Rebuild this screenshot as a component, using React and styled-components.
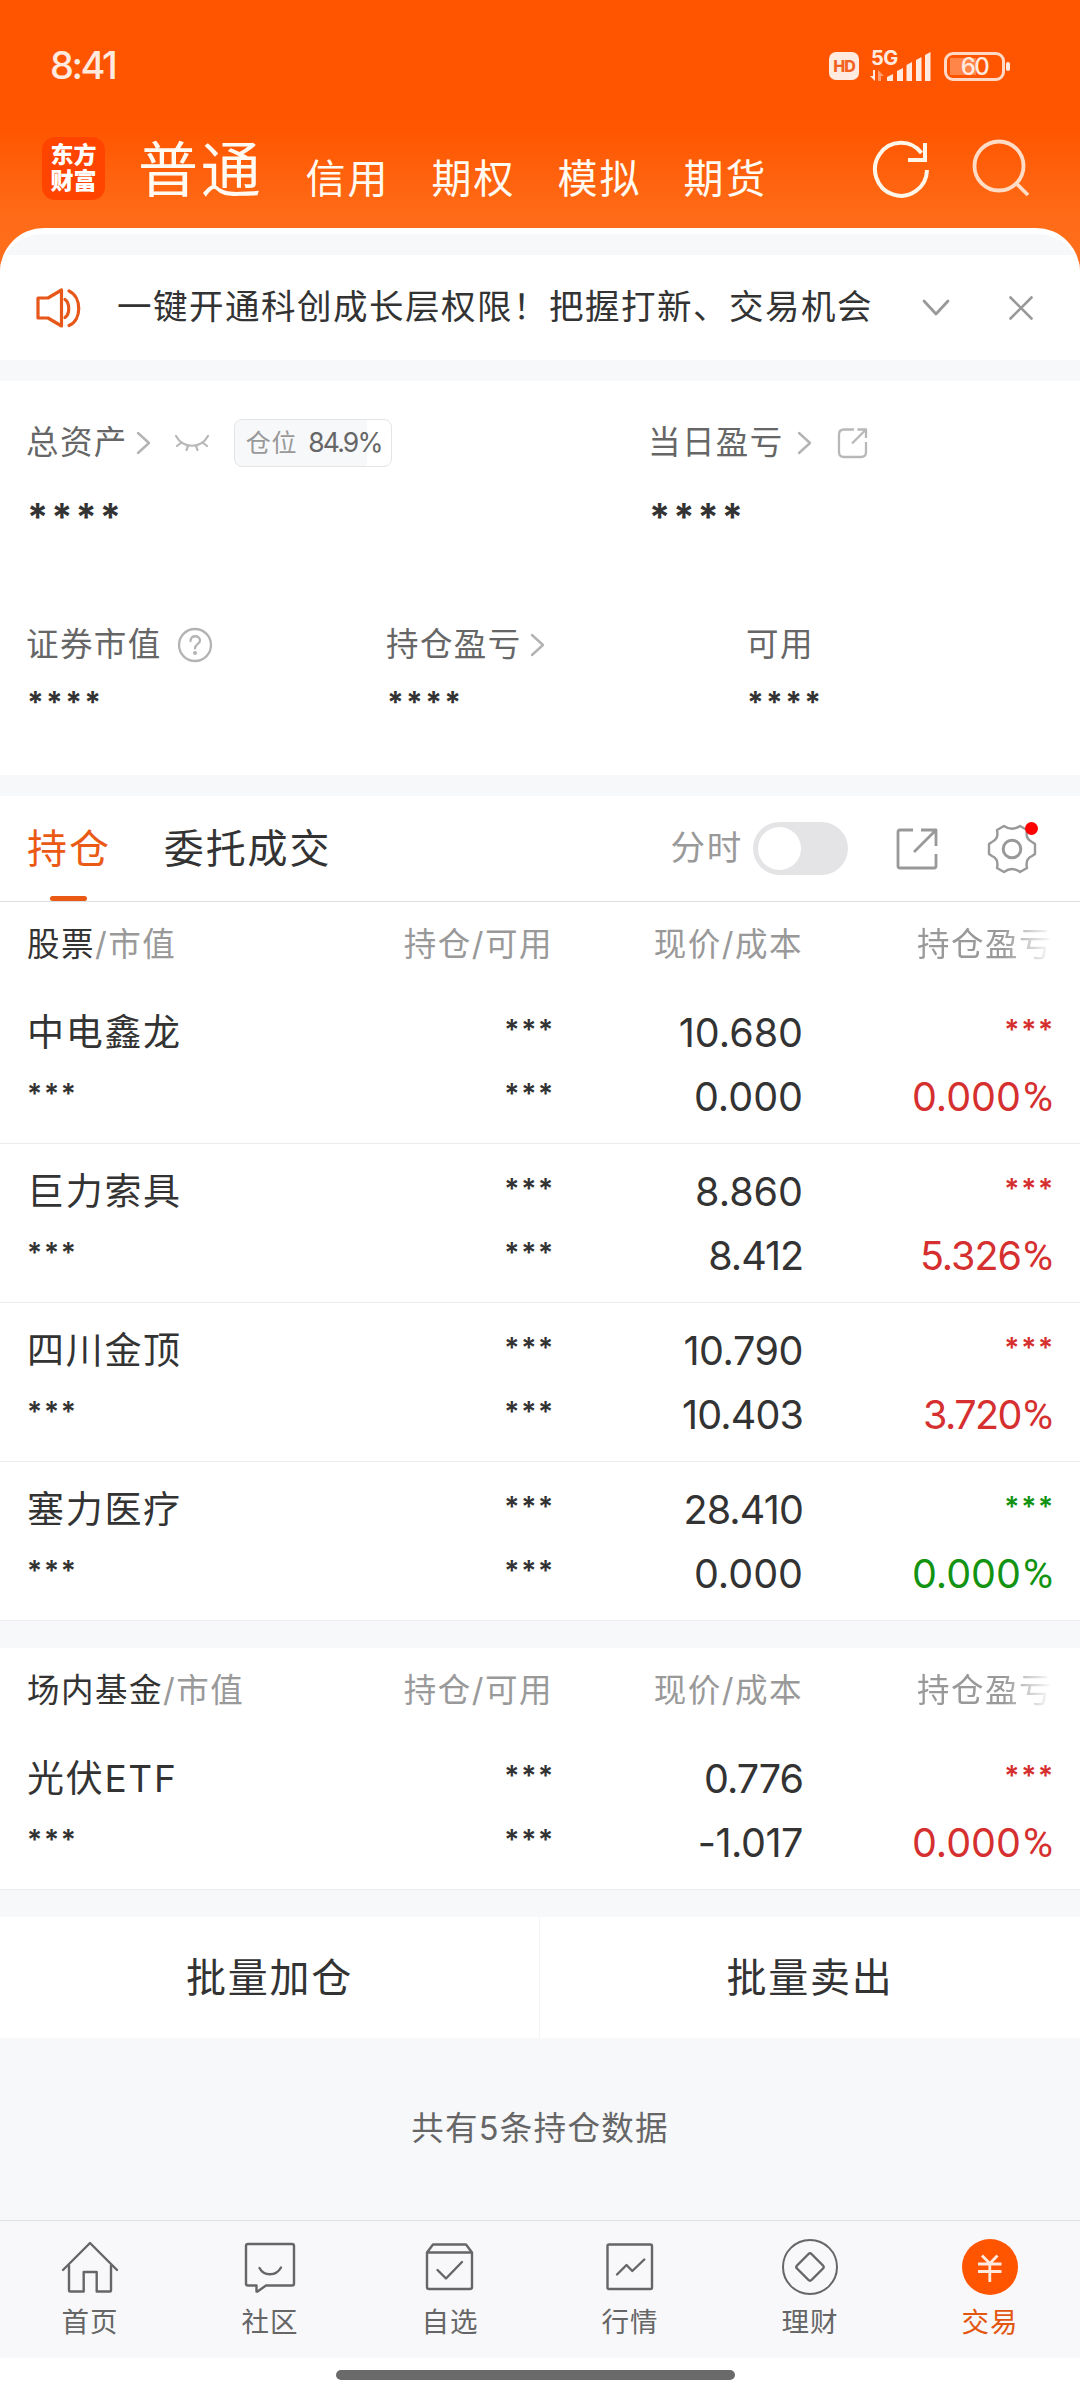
import React from "react";
import styled, { createGlobalStyle, css } from "styled-components";

////////////////////////////////////////////////////////////////////////////////
// GlobalStyle
////////////////////////////////////////////////////////////////////////////////
const GlobalStyle = createGlobalStyle`
  * {
    box-sizing: border-box;
  }

  body {
    margin: 0;
    background: #f7f8fa;
    color: #333;
    font-family: Inter, "Noto Sans CJK SC", sans-serif;
    line-height: 1.4;
  }
`;

const Page = styled.div`
  display: flex;
  flex-direction: column;
  width: 1080px;
  height: 2400px;
  overflow: hidden;
`;

////////////////////////////////////////////////////////////////////////////////
// Header: 状态栏 + 账户类型切换
////////////////////////////////////////////////////////////////////////////////
const Header = styled.header`
  flex: none;
  height: 280px;
  margin-bottom: -52px;
  background: linear-gradient(#ff5500 125px, #ff6b17 215px, #ff7020 280px);
`;

const StatusBar = styled.div`
  display: flex;
  align-items: center;
  height: 132px;
  padding: 0 75px 0 50px;
  color: #ffeae0;
`;

const Clock = styled.div`
  flex: 1;
  font-size: 38px;
  font-weight: 500;
  letter-spacing: -2.5px;
`;

const HdBadge = styled.div`
  width: 30px;
  height: 28px;
  margin-right: 10px;
  border-radius: 7px;
  background: #ffeae0;
  color: #f26322;
  font-size: 16px;
  font-weight: 800;
  line-height: 28px;
  letter-spacing: -1px;
  text-align: center;
`;

const Battery = styled.div`
  position: relative;
  width: 61px;
  height: 29px;
  margin-left: 12px;
  border: 3px solid #ffd9c6;
  border-radius: 9px;
  font-size: 24px;
  font-weight: 500;
  line-height: 24px;
  letter-spacing: -1.5px;
  text-align: center;
  background: linear-gradient(#ff8548, #ff8548) 3px 3px / 26px 17px no-repeat;

  &::after {
    content: "";
    position: absolute;
    right: -8px;
    top: 7px;
    width: 4px;
    height: 9px;
    border-radius: 2px;
    background: #ffeae0;
  }
`;

const AccountBar = styled.nav`
  display: flex;
  align-items: flex-start;
  padding: 5px 49px 0 42px;
`;

const Logo = styled.div`
  width: 63px;
  height: 63px;
  margin-right: 33px;
  padding-top: 5px;
  border-radius: 13px;
  background: #ff4400;
  color: #fff;
  font-size: 23px;
  font-weight: 900;
  line-height: 26px;
  text-align: center;
`;

const AccountTabs = styled.div`
  display: flex;
  flex: 1;
  align-items: flex-start;
  gap: 42px;
  height: 63px;
`;

const AccountTab = styled.span`
  color: #fffaf2;
  font-size: ${({ $active }) => ($active ? "60px" : "40px")};
  letter-spacing: ${({ $active }) => ($active ? "2.7px" : "2px")};
  line-height: ${({ $active }) => ($active ? "66px" : "84px")};
`;

const HeaderIcons = styled.div`
  display: flex;
  padding-top: 2px;
`;

////////////////////////////////////////////////////////////////////////////////
// Sheet: 圆角白色内容区
////////////////////////////////////////////////////////////////////////////////
const Sheet = styled.main`
  flex: none;
  border-radius: 44px 44px 0 0;
  border-top: 6px solid #fff;
  background: #f7f8fa;
  overflow: hidden;
`;

const Notice = styled.div`
  display: flex;
  align-items: center;
  height: 105px;
  margin-top: 21px;
  padding: 0 47px 0 35px;
  background: #fff;
`;

const NoticeText = styled.div`
  flex: 1;
  margin-left: 34px;
  font-size: 34.5px;
  letter-spacing: 1.5px;
  white-space: nowrap;
`;

const Assets = styled.section`
  height: 394px;
  margin-top: 21px;
  padding: 36px 27px 0 26px;
  background: #fff;
`;

const AssetRow = styled.div`
  display: grid;
  grid-template-columns: ${({ $columns }) => $columns};
  height: ${({ $height }) => $height};
`;

const AssetLabel = styled.div`
  display: flex;
  align-items: center;
  height: 52px;
  color: #666;
  font-size: 32.5px;
  letter-spacing: 1.4px;

  svg {
    flex: none;
  }
`;

const maskStyles = {
  large: css`
    font-size: 38px;
    font-weight: 700;
    letter-spacing: 3px;
    line-height: 40px;
    margin-top: 28px;
  `,
  medium: css`
    font-size: 30px;
    font-weight: 700;
    letter-spacing: 2.3px;
    line-height: 32px;
    margin-top: 15px;
  `,
};

const MaskedValue = styled.div`
  padding-left: 1px;
  ${({ $size }) => maskStyles[$size]}
`;

const PositionBadge = styled.div`
  display: flex;
  align-items: center;
  justify-content: space-between;
  width: 158px;
  height: 48px;
  margin-left: 24px;
  padding: 0 9px 0 11px;
  border: 1px solid #e3e4e6;
  border-radius: 8px;
  background: linear-gradient(90deg, #f7f8fa 84.9%, #fff 84.9%);
  color: #999;
  font-size: 25px;
  letter-spacing: 0.8px;

  b {
    color: #666;
    font-size: 26.5px;
    font-weight: 400;
    letter-spacing: -1.8px;
  }
`;

////////////////////////////////////////////////////////////////////////////////
// Toolbar: 持仓 / 委托成交
////////////////////////////////////////////////////////////////////////////////
const Toolbar = styled.div`
  display: flex;
  align-items: center;
  height: 106px;
  margin-top: 21px;
  padding: 0 43px 0 27px;
  border-bottom: 1px solid #dcdddf;
  background: #fff;
`;

const ViewTab = styled.div`
  position: relative;
  margin-right: 53px;
  color: ${({ $active }) => ($active ? "#ea5a14" : "#333")};
  font-size: 40px;
  line-height: 105px;
  letter-spacing: 1.9px;

  &::after {
    content: "";
    display: ${({ $active }) => ($active ? "block" : "none")};
    position: absolute;
    left: 23px;
    bottom: 0;
    width: 37px;
    height: 5px;
    border-radius: 3px;
    background: #ea5a14;
  }
`;

const SwitchLabel = styled.div`
  margin-left: auto;
  color: #999;
  font-size: 34.5px;
  letter-spacing: 1.8px;
`;

const Switch = styled.div`
  width: 95px;
  height: 53px;
  margin: 0 48px 0 10px;
  padding: 5px;
  border-radius: 27px;
  background: #e4e4e6;

  &::before {
    content: "";
    display: block;
    width: 43px;
    height: 43px;
    border-radius: 50%;
    background: #fff;
  }
`;

const SettingsButton = styled.div`
  position: relative;
  display: flex;
  margin-left: 49px;

  &::after {
    content: "";
    position: absolute;
    right: -1px;
    top: -2px;
    width: 13px;
    height: 13px;
    border-radius: 50%;
    background: #fe0000;
  }
`;

////////////////////////////////////////////////////////////////////////////////
// Holdings: 持仓表
////////////////////////////////////////////////////////////////////////////////
const HoldingTable = styled.section`
  margin-bottom: 27px;
  background: #fff;
`;

const gridColumns = css`
  display: grid;
  grid-template-columns: 276px 250px 250px 250px;
  padding: 0 27px;
`;

const TableHead = styled.div`
  ${gridColumns}
  height: 83px;
  color: #999;
  font-size: 32.5px;
  line-height: 86px;
  letter-spacing: 1.5px;
  text-align: right;
  white-space: nowrap;

  b {
    color: #333;
    font-weight: 400;
  }

  span:first-child {
    text-align: left;
  }

  span:last-child {
    -webkit-mask-image: linear-gradient(90deg, #000 80%, transparent);
    mask-image: linear-gradient(90deg, #000 80%, transparent);
  }
`;

const HoldingRow = styled.div`
  ${gridColumns}
  grid-template-rows: 64px 64px;
  height: 159px;
  padding-top: 15px;
  border-bottom: 1px solid #ededef;
  line-height: 66px;
  text-align: right;
`;

const toneColors = { up: "#d5302f", down: "#129312" };

const StockName = styled.div`
  font-size: 37px;
  letter-spacing: 1.7px;
  text-align: left;
`;

const Figure = styled.div`
  color: ${({ $tone }) => toneColors[$tone] || "#333"};
  font-size: 39.5px;
  letter-spacing: ${({ $tracking }) => $tracking}px;
`;

const Percent = styled.span`
  margin-left: 2px;
  font-family: Roboto, sans-serif;
  font-size: 41px;
  letter-spacing: 0;
`;

const Hidden = styled.div`
  margin-right: ${({ $left }) => ($left ? 0 : -2)}px;
  color: ${({ $tone }) => toneColors[$tone] || "#333"};
  font-size: 28px;
  font-weight: 600;
  letter-spacing: 1.8px;
  line-height: 60px;
  text-align: ${({ $left }) => ($left ? "left" : "right")};
`;

const BatchActions = styled.div`
  display: grid;
  grid-template-columns: 539px 541px;
  height: 121px;
  background: #fff;
`;

const BatchButton = styled.div`
  border-left: 1px solid #f3f4f6;
  font-size: 40px;
  letter-spacing: 1.8px;
  line-height: 121px;
  text-align: center;

  &:first-child {
    border-left: none;
  }
`;

const Summary = styled.div`
  flex: 1;
  color: #666;
  font-size: 32.5px;
  letter-spacing: 1.3px;
  line-height: 182px;
  text-align: center;
`;

////////////////////////////////////////////////////////////////////////////////
// BottomNav: 底部导航
////////////////////////////////////////////////////////////////////////////////
const BottomNav = styled.nav`
  display: grid;
  flex: none;
  grid-template-columns: repeat(6, 1fr);
  height: 138px;
  border-top: 1px solid #dfe2e5;
  background: #f8f8fa;
`;

const NavItem = styled.div`
  display: flex;
  flex-direction: column;
  align-items: center;
  padding-top: 16px;
  color: ${({ $active }) => ($active ? "#e2560f" : "#666")};
  font-size: 27.5px;
  line-height: 50px;
  letter-spacing: 1px;
`;

const HomeIndicator = styled.div`
  flex: none;
  height: 42px;
  padding: 12px 0 0 336px;
  background: #fff;

  &::after {
    content: "";
    display: block;
    width: 399px;
    height: 10px;
    border-radius: 5px;
    background: #6a6a6a;
  }
`;

////////////////////////////////////////////////////////////////////////////////
// Icons
////////////////////////////////////////////////////////////////////////////////
const Icon = styled.svg`
  display: block;
  flex: none;
  fill: none;
  stroke: currentColor;
  stroke-linejoin: ${({ $join }) => $join || "round"};
  margin-left: ${({ $gap }) => $gap || 0}px;
`;

const SignalIcon = () => (
  <Icon width="63" height="48" viewBox="0 -8 63 48">
    <g fill="#ffeae0" stroke="none">
      <text x="2" y="14.5" fontSize="20" fontWeight="700" letterSpacing="-0.6">
        5G
      </text>
      <path d="M6 20v11L1 26h3v-6z" />
      <path d="M9 31V20l6 6h-3v5z" opacity="0.5" />
      <path d="M18 31v-4l6-3v7z" />
      <path d="M28 31V21l6-3v13z" />
      <path d="M37.500 31V15l5.500-3v19z" />
      <path d="M47 31V10l5.500-3v24z" />
      <path d="M56 31V5l5.500-3v29z" />
    </g>
  </Icon>
);

const RefreshIcon = () => (
  <Icon $join="miter" width="60" height="60" viewBox="0 0 60 60" strokeWidth="4" color="#fff6ea">
    <path d="M56 31A26 26.500 0 1 1 50.500 14" />
    <path d="M54 4V21H37" />
  </Icon>
);

const SearchIcon = () => (
  <Icon $gap="40" width="60" height="60" viewBox="0 0 60 60" strokeWidth="3.8" color="#ffdcc6">
    <circle cx="28" cy="27" r="24.500" />
    <path d="M45 44 57 56" />
  </Icon>
);

const SpeakerIcon = () => (
  <Icon width="48" height="42" viewBox="0 0 48 42" strokeWidth="3.2" color="#e8571a">
    <path d="M3 11H13L26.500 3V39L13 31H3Z" />
    <path d="M30 12.500C35 16 35 27 30 30.500" strokeLinecap="round" />
    <path d="M34 4C47 10 47 33 34 38.500" strokeLinecap="round" />
  </Icon>
);

const ChevronRight = ({ gap }) => (
  <Icon $gap={gap} width="15" height="24" viewBox="0 0 15 24" strokeWidth="2.4" strokeLinecap="round" color="#b3b3b3">
    <path d="M2 2 13 12 2 22" />
  </Icon>
);

const ClosedEye = () => (
  <Icon $gap="23" width="36" height="22" viewBox="0 0 36 22" strokeWidth="2.2" strokeLinecap="round" color="#b8b8b8">
    <path d="M2 4C9 17 27 17 34 4" />
    <path d="M7.500 10.500 3 14M14 14 12.500 18M22 14 23.500 18M28.500 10.500 33 14" />
  </Icon>
);

const HelpIcon = () => (
  <Icon $gap="15" width="36" height="36" viewBox="0 0 36 36" strokeWidth="2.3" strokeLinecap="round" color="#b3b3b3">
    <circle cx="18" cy="18" r="16" />
    <path d="M13.500 14C13.500 7.500 23 8 23 13.500C23 17 18 17 18 21.500" />
    <circle cx="18" cy="26" r="0.900" />
  </Icon>
);

const RoundShareIcon = () => (
  <Icon $gap="25" width="32" height="32" viewBox="0 0 32 32" strokeWidth="2.3" color="#b8b8b8">
    <path d="M17 2.500H7Q2 2.500 2 7.500V25Q2 30 7 30H24Q29 30 29 25V15" />
    <path d="M20.500 2.500H29V11M29 2.500 15 16.500" />
  </Icon>
);

const SquareShareIcon = () => (
  <Icon width="42" height="42" viewBox="0 0 42 42" strokeWidth="2.8" color="#999">
    <path d="M17 2H4Q2 2 2 4V38Q2 40 4 40H38Q40 40 40 38V26" />
    <path d="M25 2H40V18M40 2 18 24" />
  </Icon>
);

const GearIcon = () => (
  <Icon width="50" height="50" viewBox="0 0 50 50" strokeWidth="2.4" color="#999">
    <path d="M17 2Q25 7.500 33 2L40 6Q38 15 45 18L48 20V30L45 32Q38 35 40 44L33 48Q25 42 17 48L10 44Q12 35 5 32L2 30V20L5 18Q12 15 10 6Z" />
    <circle cx="25" cy="25" r="8.800" strokeWidth="3" />
  </Icon>
);

const navIcons = {
  home: (
    <>
      <path d="M3 33 30 6 57 33" strokeLinecap="round" />
      <path d="M9 28V53.500Q9 54.500 10 54.500H23.700V35H36.700V54.500H50Q51 54.500 51 53.500V28" />
    </>
  ),
  community: (
    <>
      <path d="M8 7H52Q54 7 54 9V46.500Q54 48.500 52 48.500H26L17.500 54.500H16.500V48.500H8Q6 48.500 6 46.500V9Q6 7 8 7Z" />
      <path d="M19.500 31C24 39.500 36 39.500 41 30.500" strokeLinecap="round" />
    </>
  ),
  watchlist: (
    <>
      <path d="M7 15.500H52V50Q52 52 50 52H9Q7 52 7 50ZL13 7.500H46L52 15.500" />
      <path d="M17.500 33 26 41.500 42 25" strokeLinecap="round" />
    </>
  ),
  market: (
    <>
      <rect x="7.500" y="7.500" width="44.500" height="44.500" rx="1.500" />
      <path d="M17 37.500 26.500 28 32.300 34 44.300 22.500" strokeLinecap="round" />
    </>
  ),
  finance: (
    <>
      <circle cx="30" cy="30" r="27" strokeWidth="2" />
      <path d="M28.500 17Q30 15.500 31.500 17L43 28.500Q44.500 30 43 31.500L31.500 43Q30 44.500 28.500 43L17 31.500Q15.500 30 17 28.500Z" />
    </>
  ),
  trade: (
    <>
      <circle cx="30" cy="30" r="28" fill="#ff5500" stroke="none" />
      <path d="M22 18.500 29.800 26.500 37.500 18.500M18 27H41.500M18 34.500H41.500M29.800 26.500V45" stroke="#ffeadf" strokeWidth="2.800" />
    </>
  ),
};

////////////////////////////////////////////////////////////////////////////////
// Data
////////////////////////////////////////////////////////////////////////////////
const stocks = [
  { name: "中电鑫龙", price: "10.680", cost: "0.000", rate: "0.000", tone: "up" },
  { name: "巨力索具", price: "8.860", cost: "8.412", rate: "5.326", tone: "up" },
  { name: "四川金顶", price: "10.790", cost: "10.403", rate: "3.720", tone: "up" },
  { name: "塞力医疗", price: "28.410", cost: "0.000", rate: "0.000", tone: "down" },
];

const funds = [
  { name: "光伏ETF", price: "0.776", cost: "-1.017", rate: "0.000", tone: "up" },
];

const navItems = [
  { icon: "home", label: "首页" },
  { icon: "community", label: "社区" },
  { icon: "watchlist", label: "自选" },
  { icon: "market", label: "行情" },
  { icon: "finance", label: "理财" },
  { icon: "trade", label: "交易", active: true },
];

const getTracking = (value) => {
  const narrow = (value.match(/[2347]/g) || []).length;
  return -(narrow * 2.6) / value.length;
};

const Holdings = ({ title, rows }) => (
  <HoldingTable>
    <TableHead>
      <span>
        <b>{title}</b>/市值
      </span>
      <span>持仓/可用</span>
      <span>现价/成本</span>
      <span>持仓盈亏</span>
    </TableHead>
    {rows.map((row) => (
      <HoldingRow key={row.name}>
        <StockName>{row.name}</StockName>
        <Hidden>***</Hidden>
        <Figure $tracking={getTracking(row.price)}>{row.price}</Figure>
        <Hidden $tone={row.tone}>***</Hidden>
        <Hidden $left>***</Hidden>
        <Hidden>***</Hidden>
        <Figure $tracking={getTracking(row.cost)}>{row.cost}</Figure>
        <Figure $tone={row.tone} $tracking={getTracking(row.rate)}>
          {row.rate}
          <Percent>%</Percent>
        </Figure>
      </HoldingRow>
    ))}
  </HoldingTable>
);

////////////////////////////////////////////////////////////////////////////////
// App
////////////////////////////////////////////////////////////////////////////////
export default function App() {
  return (
    <Page>
      <GlobalStyle />

      <Header>
        <StatusBar>
          <Clock>8:41</Clock>
          <HdBadge>HD</HdBadge>
          <SignalIcon />
          <Battery>60</Battery>
        </StatusBar>
        <AccountBar>
          <Logo>
            东方
            <br />
            财富
          </Logo>
          <AccountTabs>
            <AccountTab $active>普通</AccountTab>
            <AccountTab>信用</AccountTab>
            <AccountTab>期权</AccountTab>
            <AccountTab>模拟</AccountTab>
            <AccountTab>期货</AccountTab>
          </AccountTabs>
          <HeaderIcons>
            <RefreshIcon />
            <SearchIcon />
          </HeaderIcons>
        </AccountBar>
      </Header>

      <Sheet>
        <Notice>
          <SpeakerIcon />
          <NoticeText>一键开通科创成长层权限！把握打新、交易机会</NoticeText>
          <Icon width="30" height="20" viewBox="0 0 30 20" strokeWidth="2.8" strokeLinecap="round" color="#999">
            <path d="M3 3 15 16 27 3" />
          </Icon>
          <Icon $gap="58" width="24" height="24" viewBox="0 0 24 24" strokeWidth="2.6" strokeLinecap="round" color="#999">
            <path d="M1.500 1.500 22.500 22.500M22.500 1.500 1.500 22.500" />
          </Icon>
        </Notice>

        <Assets>
          <AssetRow $columns="622px 1fr" $height="202px">
            <div>
              <AssetLabel>
                总资产
                <ChevronRight gap="8" />
                <ClosedEye />
                <PositionBadge>
                  仓位 <b>84.9%</b>
                </PositionBadge>
              </AssetLabel>
              <MaskedValue $size="large">****</MaskedValue>
            </div>
            <div>
              <AssetLabel>
                当日盈亏
                <ChevronRight gap="13" />
                <RoundShareIcon />
              </AssetLabel>
              <MaskedValue $size="large">****</MaskedValue>
            </div>
          </AssetRow>
          <AssetRow $columns="360px 360px 1fr" $height="120px">
            <div>
              <AssetLabel>
                证券市值
                <HelpIcon />
              </AssetLabel>
              <MaskedValue $size="medium">****</MaskedValue>
            </div>
            <div>
              <AssetLabel>
                持仓盈亏
                <ChevronRight gap="8" />
              </AssetLabel>
              <MaskedValue $size="medium">****</MaskedValue>
            </div>
            <div>
              <AssetLabel>可用</AssetLabel>
              <MaskedValue $size="medium">****</MaskedValue>
            </div>
          </AssetRow>
        </Assets>

        <Toolbar>
          <ViewTab $active>持仓</ViewTab>
          <ViewTab>委托成交</ViewTab>
          <SwitchLabel>分时</SwitchLabel>
          <Switch />
          <SquareShareIcon />
          <SettingsButton>
            <GearIcon />
          </SettingsButton>
        </Toolbar>

        <Holdings title="股票" rows={stocks} />
        <Holdings title="场内基金" rows={funds} />

        <BatchActions>
          <BatchButton>批量加仓</BatchButton>
          <BatchButton>批量卖出</BatchButton>
        </BatchActions>
      </Sheet>

      <Summary>共有5条持仓数据</Summary>

      <BottomNav>
        {navItems.map((item) => (
          <NavItem key={item.label} $active={item.active}>
            <Icon width="60" height="60" viewBox="0 0 60 60" strokeWidth="2.4">
              {navIcons[item.icon]}
            </Icon>
            {item.label}
          </NavItem>
        ))}
      </BottomNav>
      <HomeIndicator />
    </Page>
  );
}
